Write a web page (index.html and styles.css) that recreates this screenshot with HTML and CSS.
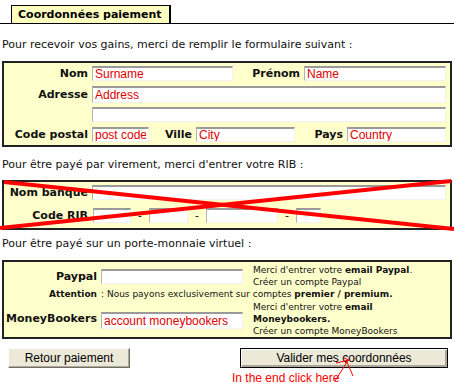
FILE: index.html
```html
<!DOCTYPE html>
<html lang="fr">
<head>
    <meta charset="UTF-8">
    <title>Coordonnées paiement</title>
    <link rel="stylesheet" href="styles.css">
</head>
<body>
    <div class="page">
        <div class="tabs">
            <span class="tab">Coordonnées paiement</span>
        </div>

        <p class="intro">Pour recevoir vos gains, merci de remplir le formulaire suivant :</p>

        <div class="box box-address">
            <div class="row row-a">
                <label class="lbl">Nom</label>
                <input class="field w-nom" type="text" value="Surname">
                <label class="lbl lbl-prenom">Prénom</label>
                <input class="field w-prenom" type="text" value="Name">
            </div>
            <div class="row row-b">
                <label class="lbl">Adresse</label>
                <input class="field w-full" type="text" value="Address">
            </div>
            <div class="row row-c">
                <label class="lbl"></label>
                <input class="field w-full" type="text">
            </div>
            <div class="row row-d">
                <label class="lbl">Code postal</label>
                <input class="field w-cp" type="text" value="post code">
                <label class="lbl lbl-ville">Ville</label>
                <input class="field w-ville" type="text" value="City">
                <label class="lbl lbl-pays">Pays</label>
                <input class="field w-pays" type="text" value="Country">
            </div>
        </div>

        <p class="intro intro-rib">Pour être payé par virement, merci d'entrer votre RIB :</p>

        <div class="box box-rib">
            <div class="row row-bank">
                <label class="lbl">Nom banque</label>
                <input class="field w-full" type="text">
            </div>
            <div class="row row-code">
                <label class="lbl">Code RIB</label>
                <input class="field w-rib1" type="text">
                <span class="dash">-</span>
                <input class="field w-rib2" type="text">
                <span class="dash">-</span>
                <input class="field w-rib3" type="text">
                <span class="dash">-</span>
                <input class="field w-rib4" type="text">
            </div>
            <svg class="cross" width="452" height="50" viewBox="0 0 452 50">
                <line x1="2" y1="2" x2="452" y2="49" />
                <line x1="-2" y1="48" x2="449" y2="1" />
            </svg>
        </div>

        <p class="intro intro-wallet">Pour être payé sur un porte-monnaie virtuel :</p>

        <div class="box box-wallet">
            <label class="lbl">Paypal</label>
            <input class="field w-wallet" type="text">
            <div class="note">
                Merci d'entrer votre <b>email Paypal</b>.<br>
                Créer un compte Paypal
            </div>

            <span class="lbl lbl-small">Attention</span>
            <div class="note note-wide">: Nous payons exclusivement sur comptes <b>premier / premium.</b></div>

            <label class="lbl lbl-mb">MoneyBookers</label>
            <input class="field w-wallet field-mb" type="text" value="account moneybookers">
            <div class="note">
                Merci d'entrer votre <b>email</b><br>
                <b>Moneybookers.</b><br>
                Créer un compte MoneyBookers
            </div>
        </div>

        <div class="buttons">
            <button class="btn btn-back">Retour paiement</button>
            <button class="btn btn-submit">Valider mes coordonnées</button>
        </div>

        <div class="hint">In the end click here</div>
        <svg class="arrow" width="30" height="30" viewBox="0 0 30 30">
            <polyline points="5,25 17,6 23,20" />
            <line x1="6" y1="7" x2="19" y2="4" />
            <polyline points="14,2 19,4 15,7" />
        </svg>
    </div>
</body>
</html>
```

FILE: styles.css
```css
* {
    margin: 0;
    padding: 0;
    box-sizing: border-box;
}

body {
    font-family: "DejaVu Sans", Verdana, sans-serif;
    font-size: 11px;
    color: #111;
    background: #fff;
}

.page {
    position: relative;
    width: 454px;
    height: 389px;
    padding: 0 2px;
}

/* tab header */
.tabs {
    height: 24px;
    margin: 0 -2px;
    border-bottom: 1px solid #000;
    display: flex;
    align-items: flex-end;
}

.tab {
    margin-left: 11px;
    height: 18px;
    padding: 0 7px 0 6px;
    background: #ffffc0;
    border: 1px solid #000;
    border-right-width: 2px;
    border-bottom: none;
    font-weight: bold;
    font-size: 11px;
    line-height: 17px;
    color: #000;
}

.intro {
    line-height: 14px;
    margin: 14px 0 9px;
}

.intro-rib {
    margin: 11px 0 8px;
}

.intro-wallet {
    margin: 7px 0 9px;
}

/* yellow boxes */
.box {
    position: relative;
    background: #ffffcc;
    border: 2px solid #222;
}

.box-address {
    height: 86px;
    padding: 3px 0;
    display: flex;
    flex-direction: column;
    gap: 5px;
}

.box-address .row-c {
    margin-top: -1px;
}

.row {
    display: flex;
    align-items: center;
}

.lbl {
    flex: none;
    width: 84px;
    margin-right: 4px;
    text-align: right;
    font-weight: bold;
    white-space: nowrap;
}

.lbl-prenom {
    width: 67px;
}

.lbl-ville {
    width: 43px;
}

.lbl-pays {
    width: 48px;
}

.field {
    flex: none;
    height: 15px;
    border-style: solid;
    border-width: 2px 1px 1px 1px;
    border-color: #9a9a9a #f2f2f2 #f2f2f2 #b4b4b4;
    background: #fff;
    color: #e00000;
    font-family: "Liberation Sans", Arial, sans-serif;
    font-size: 12px;
    padding: 0 2px;
    outline: none;
}

.row-b .field {
    height: 17px;
}

.w-nom { width: 141px; }
.w-prenom { width: 142px; }
.w-full { width: 354px; }
.w-cp { width: 57px; }
.w-ville { width: 99px; }
.w-pays { width: 99px; }

/* rib box */
.box-rib {
    height: 50px;
    padding: 3px 0;
    display: flex;
    flex-direction: column;
    gap: 8px;
}

.row-code .lbl {
    margin-right: 5px;
}

.w-rib1 { width: 38px; }
.w-rib2 { width: 39px; }
.w-rib3 { width: 72px; }
.w-rib4 { width: 25px; }

.dash {
    width: 18px;
    text-align: center;
}

.cross {
    position: absolute;
    left: -2px;
    top: -2px;
    overflow: visible;
}

.cross line {
    stroke: #ff0000;
    stroke-width: 4;
}

/* wallet box */
.box-wallet {
    height: 79px;
    padding: 2px 0 0;
    display: grid;
    grid-template-columns: 93px 142px 1fr;
    column-gap: 4px;
    align-items: center;
}

.box-wallet .lbl {
    width: auto;
    margin: 0;
}

.lbl-small {
    font-size: 9px;
    line-height: 12px;
}

.w-wallet {
    width: 142px;
}

.field-mb {
    height: 17px;
    margin-top: 3px;
}

.note {
    font-size: 9px;
    line-height: 12px;
    padding-left: 6px;
    white-space: nowrap;
}

.note-wide {
    grid-column: 2 / 4;
    padding-left: 0;
}

/* buttons */
.buttons {
    display: flex;
    justify-content: space-between;
    margin-top: 9px;
    padding: 0 4px 0 6px;
}

.btn {
    height: 20px;
    background: #ece9d8;
    font-family: "Liberation Sans", Arial, sans-serif;
    font-size: 12px;
    color: #000;
    border: 1px solid;
    border-color: #fff #716f64 #716f64 #fff;
    box-shadow: inset -1px -1px #aca899;
}

.btn-back {
    width: 122px;
}

.btn-submit {
    width: 208px;
    border: 1px solid #000;
    box-shadow: inset 1px 1px #fff, inset -2px -2px #aca899;
}

.hint {
    margin: 3px 0 0 230px;
    color: #ff0000;
    font-family: "Liberation Sans", Arial, sans-serif;
    font-size: 12px;
    line-height: 14px;
}

.arrow {
    position: absolute;
    left: 330px;
    top: 356px;
}

.arrow polyline,
.arrow line {
    fill: none;
    stroke: #ff0000;
    stroke-width: 1;
}
```
